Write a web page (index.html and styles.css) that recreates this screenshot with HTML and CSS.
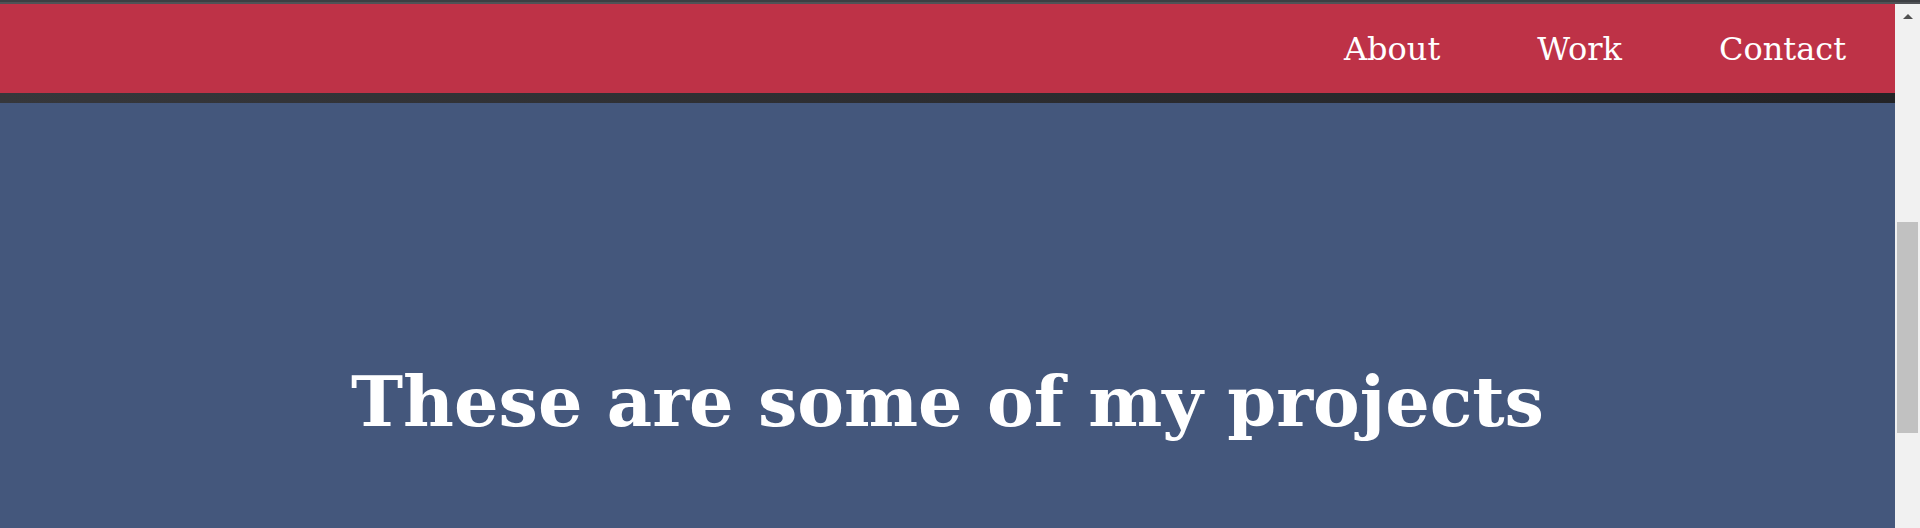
FILE: index.html
```html
<!DOCTYPE html>
<html lang="en">
<head>
<meta charset="utf-8">
<title>Projects</title>
<link rel="stylesheet" href="styles.css">
</head>
<body>
<div class="chrome"></div>
<div class="frame">
  <div class="page">
    <header class="nav">
      <a class="nav-link" href="#about">About</a>
      <a class="nav-link" href="#work">Work</a>
      <a class="nav-link" href="#contact">Contact</a>
    </header>
    <section class="hero">
      <h1 class="hero-title">These are some of my projects</h1>
    </section>
  </div>
  <div class="scrollbar">
    <div class="scroll-arrow"></div>
    <div class="scroll-thumb"></div>
  </div>
</div>
</body>
</html>
```

FILE: styles.css
```css
html, body {
  margin: 0;
  padding: 0;
  height: 528px;
  overflow: hidden;
}
body {
  display: flex;
  flex-direction: column;
  font-family: "DejaVu Serif", Georgia, serif;
  background: #44577c;
}
.chrome {
  height: 4px;
  flex: none;
  background: linear-gradient(to bottom, #3d3f43 0, #3d3f43 2px, #505256 2px, #505256 4px);
}
.frame {
  flex: 1;
  display: flex;
  min-height: 0;
}
.page {
  flex: 1;
  display: flex;
  flex-direction: column;
  min-width: 0;
}
.nav {
  height: 89px;
  flex: none;
  background: #be3247;
  border-bottom: 10px solid #2c2d30;
  border-image: linear-gradient(to right, #36373b, #232326) 1;
  display: flex;
  justify-content: flex-end;
  align-items: center;
  gap: 97px;
  padding-right: 49px;
  box-sizing: content-box;
}
.nav-link {
  color: #ffffff;
  text-decoration: none;
  font-size: 32px;
  line-height: 1;
}
.hero {
  flex: 1;
  background: #44577c;
  display: flex;
  justify-content: center;
  padding-top: 264px;
}
.hero-title {
  margin: 0;
  color: #ffffff;
  font-weight: bold;
  font-size: 70px;
  line-height: 1;
}
.scrollbar {
  width: 25px;
  flex: none;
  background: #f1f1f1;
  display: flex;
  flex-direction: column;
  align-items: center;
}
.scroll-arrow {
  width: 0;
  height: 0;
  margin-top: 10px;
  border-left: 5px solid transparent;
  border-right: 5px solid transparent;
  border-bottom: 5px solid #505050;
}
.scroll-thumb {
  width: 21px;
  height: 211px;
  margin-top: 203px;
  background: #c1c1c1;
}
```
